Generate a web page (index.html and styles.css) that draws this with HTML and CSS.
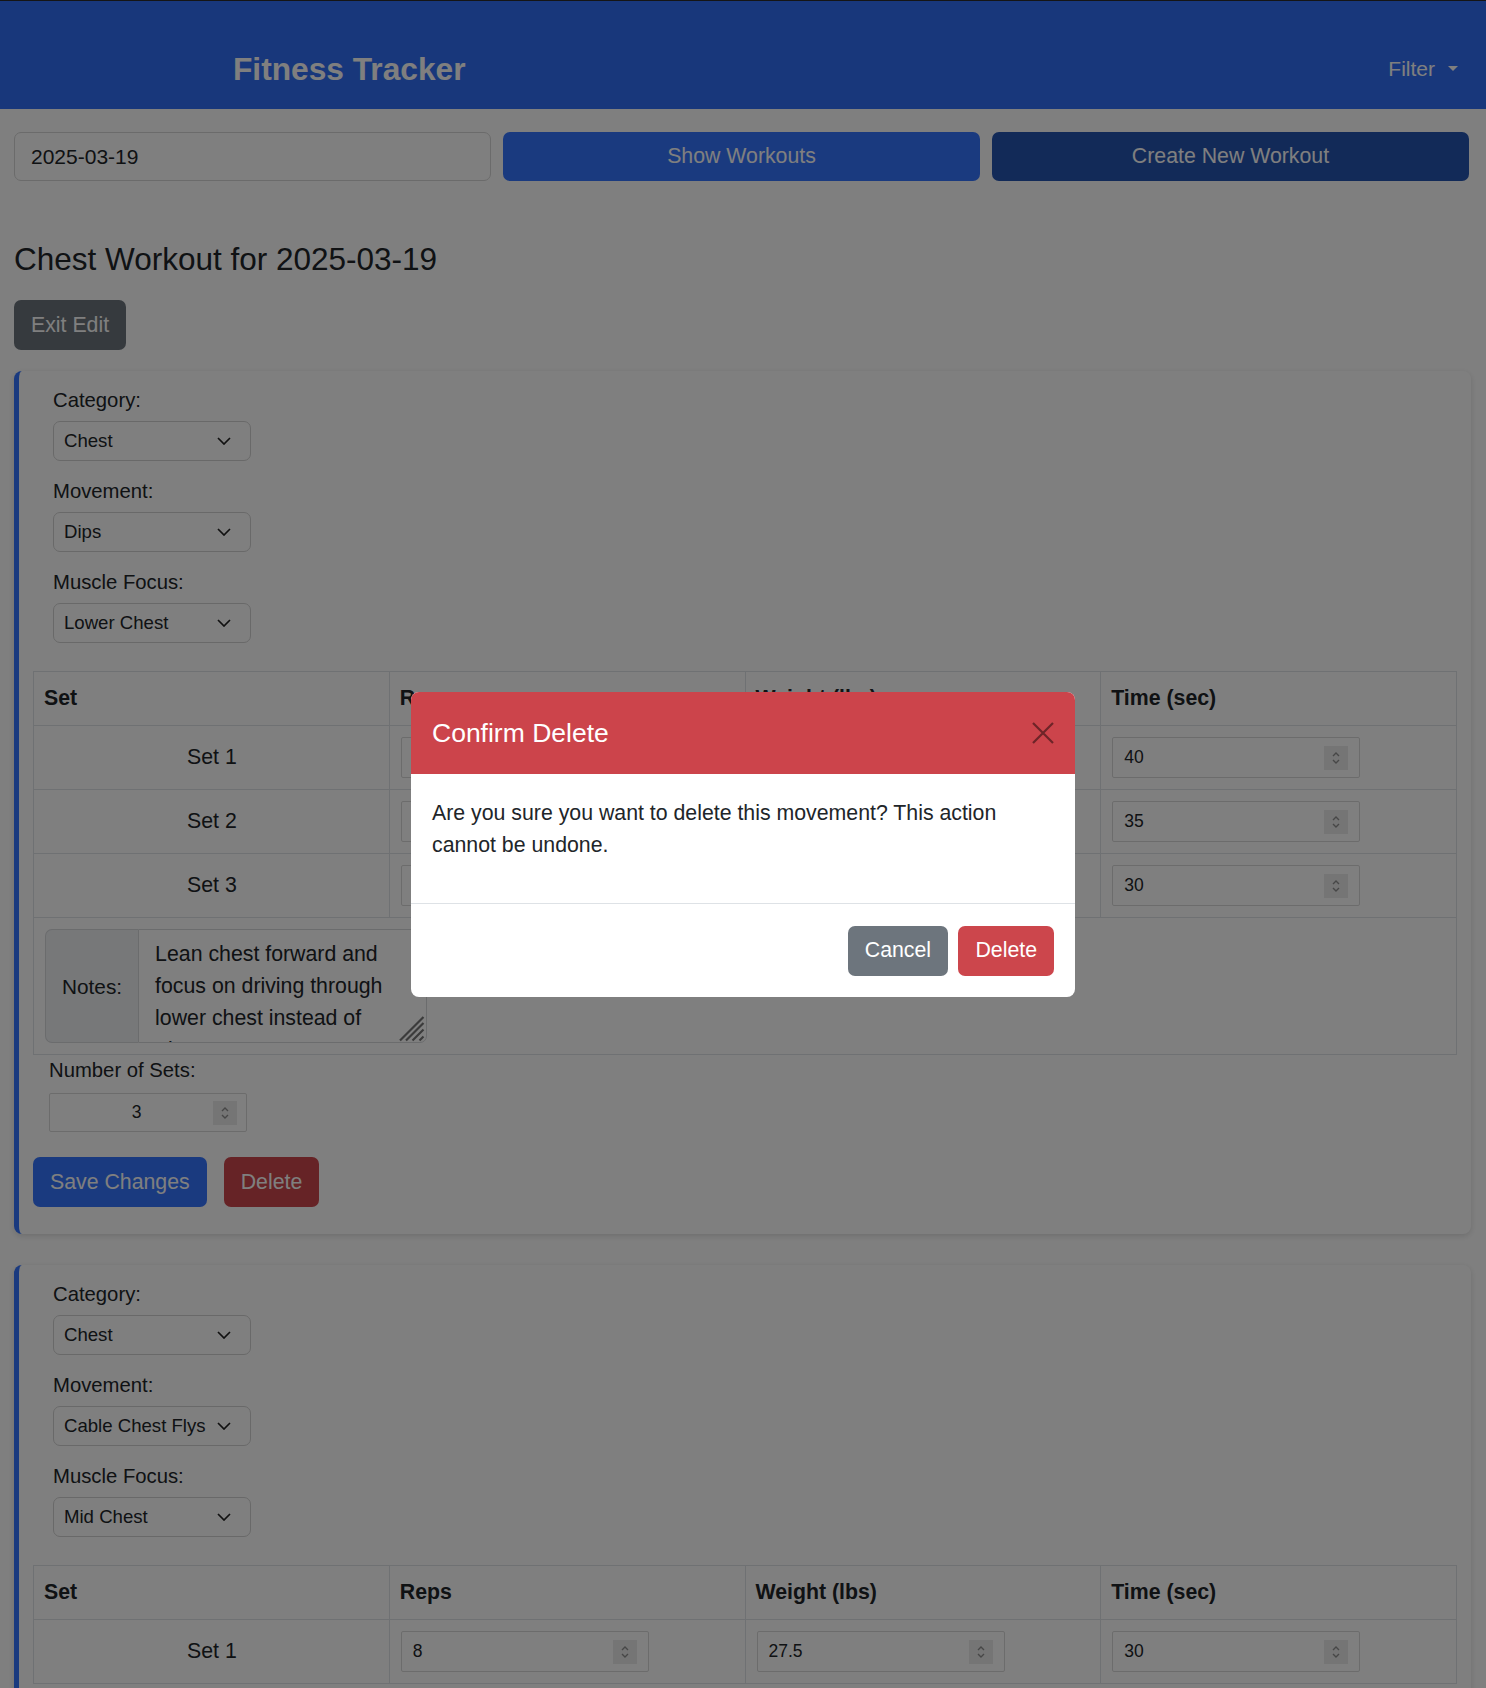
FILE: index.html
```html
<!DOCTYPE html>
<html lang="en">
<head>
<meta charset="utf-8">
<title>Fitness Tracker</title>
<link rel="stylesheet" href="styles.css">
</head>
<body>
<header class="topbar">
  <div class="brand">Fitness Tracker</div>
  <div class="filter">Filter <span class="caret"></span></div>
</header>

<main class="container">
  <div class="toolbar">
    <input class="date-input" type="text" value="2025-03-19">
    <button class="btn btn-primary">Show Workouts</button>
    <button class="btn btn-navy">Create New Workout</button>
  </div>

  <h2 class="page-title">Chest Workout for 2025-03-19</h2>
  <button class="btn btn-secondary">Exit Edit</button>

  <section class="card">
    <div class="field">
      <label class="field-label">Category:</label>
      <div class="select"><span>Chest</span><svg class="chev" viewBox="0 0 14 8"><path d="M1 1l6 6 6-6"/></svg></div>
    </div>
    <div class="field">
      <label class="field-label">Movement:</label>
      <div class="select"><span>Dips</span><svg class="chev" viewBox="0 0 14 8"><path d="M1 1l6 6 6-6"/></svg></div>
    </div>
    <div class="field field-last">
      <label class="field-label">Muscle Focus:</label>
      <div class="select"><span>Lower Chest</span><svg class="chev" viewBox="0 0 14 8"><path d="M1 1l6 6 6-6"/></svg></div>
    </div>

    <table class="sets">
      <thead>
        <tr><th>Set</th><th>Reps</th><th>Weight (lbs)</th><th>Time (sec)</th></tr>
      </thead>
      <tbody>
        <tr>
          <td class="set-name">Set 1</td>
          <td><div class="num"><input type="text" value="10"><span class="spin"><svg viewBox="0 0 10 18"><path d="M2 7l3-3 3 3M2 11l3 3 3-3"/></svg></span></div></td>
          <td><div class="num"><input type="text" value="0"><span class="spin"><svg viewBox="0 0 10 18"><path d="M2 7l3-3 3 3M2 11l3 3 3-3"/></svg></span></div></td>
          <td><div class="num"><input type="text" value="40"><span class="spin"><svg viewBox="0 0 10 18"><path d="M2 7l3-3 3 3M2 11l3 3 3-3"/></svg></span></div></td>
        </tr>
        <tr>
          <td class="set-name">Set 2</td>
          <td><div class="num"><input type="text" value="10"><span class="spin"><svg viewBox="0 0 10 18"><path d="M2 7l3-3 3 3M2 11l3 3 3-3"/></svg></span></div></td>
          <td><div class="num"><input type="text" value="0"><span class="spin"><svg viewBox="0 0 10 18"><path d="M2 7l3-3 3 3M2 11l3 3 3-3"/></svg></span></div></td>
          <td><div class="num"><input type="text" value="35"><span class="spin"><svg viewBox="0 0 10 18"><path d="M2 7l3-3 3 3M2 11l3 3 3-3"/></svg></span></div></td>
        </tr>
        <tr>
          <td class="set-name">Set 3</td>
          <td><div class="num"><input type="text" value="8"><span class="spin"><svg viewBox="0 0 10 18"><path d="M2 7l3-3 3 3M2 11l3 3 3-3"/></svg></span></div></td>
          <td><div class="num"><input type="text" value="0"><span class="spin"><svg viewBox="0 0 10 18"><path d="M2 7l3-3 3 3M2 11l3 3 3-3"/></svg></span></div></td>
          <td><div class="num"><input type="text" value="30"><span class="spin"><svg viewBox="0 0 10 18"><path d="M2 7l3-3 3 3M2 11l3 3 3-3"/></svg></span></div></td>
        </tr>
        <tr>
          <td colspan="4" class="notes-cell">
            <div class="input-group">
              <span class="addon">Notes:</span>
              <div class="notes-box">
                <textarea class="notes">Lean chest forward and focus on driving through lower chest instead of triceps.</textarea>
                <svg class="grip" viewBox="0 0 26 26"><path d="M1 24.5L24.5 1M7 24.5L24.5 7M13.5 24.5L24.5 13.5M20.5 24.5L24.5 20.5"/></svg>
              </div>
            </div>
          </td>
        </tr>
      </tbody>
    </table>

    <label class="sets-label">Number of Sets:</label>
    <div class="num num-sets"><input type="text" value="3"><span class="spin"><svg viewBox="0 0 10 18"><path d="M2 7l3-3 3 3M2 11l3 3 3-3"/></svg></span></div>

    <div class="actions">
      <button class="btn btn-primary">Save Changes</button>
      <button class="btn btn-danger">Delete</button>
    </div>
  </section>

  <section class="card card-next">
    <div class="field">
      <label class="field-label">Category:</label>
      <div class="select"><span>Chest</span><svg class="chev" viewBox="0 0 14 8"><path d="M1 1l6 6 6-6"/></svg></div>
    </div>
    <div class="field">
      <label class="field-label">Movement:</label>
      <div class="select"><span>Cable Chest Flys</span><svg class="chev" viewBox="0 0 14 8"><path d="M1 1l6 6 6-6"/></svg></div>
    </div>
    <div class="field field-last">
      <label class="field-label">Muscle Focus:</label>
      <div class="select"><span>Mid Chest</span><svg class="chev" viewBox="0 0 14 8"><path d="M1 1l6 6 6-6"/></svg></div>
    </div>

    <table class="sets">
      <thead>
        <tr><th>Set</th><th>Reps</th><th>Weight (lbs)</th><th>Time (sec)</th></tr>
      </thead>
      <tbody>
        <tr>
          <td class="set-name">Set 1</td>
          <td><div class="num"><input type="text" value="8"><span class="spin"><svg viewBox="0 0 10 18"><path d="M2 7l3-3 3 3M2 11l3 3 3-3"/></svg></span></div></td>
          <td><div class="num"><input type="text" value="27.5"><span class="spin"><svg viewBox="0 0 10 18"><path d="M2 7l3-3 3 3M2 11l3 3 3-3"/></svg></span></div></td>
          <td><div class="num"><input type="text" value="30"><span class="spin"><svg viewBox="0 0 10 18"><path d="M2 7l3-3 3 3M2 11l3 3 3-3"/></svg></span></div></td>
        </tr>
      </tbody>
    </table>
  </section>
</main>

<div class="backdrop"></div>
<div class="modal-wrap">
  <div class="modal" role="dialog">
    <div class="modal-header">
      <h5 class="modal-title">Confirm Delete</h5>
      <button class="close" aria-label="Close"><svg viewBox="0 0 22 22"><path d="M1 1L21 21M21 1L1 21"/></svg></button>
    </div>
    <div class="modal-body">
      <p>Are you sure you want to delete this movement? This action cannot be undone.</p>
    </div>
    <div class="modal-footer">
      <button class="btn btn-secondary">Cancel</button>
      <button class="btn btn-danger-solid">Delete</button>
    </div>
  </div>
</div>
</body>
</html>
```

FILE: styles.css
```css
* {
  box-sizing: border-box;
}

html,
body {
  margin: 0;
  padding: 0;
}

body {
  font-family: "Liberation Sans", Arial, Helvetica, sans-serif;
  font-size: 21.3px;
  line-height: 1.5;
  color: #212529;
  background: #ffffff;
  overflow: hidden;
}

/* ---------- top bar ---------- */
.topbar {
  height: 109px;
  background: #306ef6;
  border-top: 1px solid #2a2a2a;
  display: flex;
  align-items: center;
  justify-content: space-between;
  padding: 27px 28px 0 233px;
  color: #ffffff;
}

.brand {
  font-size: 31.7px;
  font-weight: bold;
  line-height: 40px;
}

.filter {
  display: flex;
  align-items: center;
  gap: 13px;
  font-size: 21px;
  line-height: 31px;
}

.caret {
  width: 0;
  height: 0;
  border-left: 5px solid transparent;
  border-right: 5px solid transparent;
  border-top: 5.5px solid #ffffff;
}

/* ---------- container ---------- */
.container {
  padding: 0 15px 0 14px;
}

.toolbar {
  display: grid;
  grid-template-columns: repeat(3, 1fr);
  gap: 12px;
  margin-top: 23px;
  padding-right: 2px;
}

.date-input {
  height: 49px;
  border: 1px solid #d6d6d6;
  border-radius: 7px;
  padding: 0 16px;
  font-family: inherit;
  font-size: 21px;
  color: #212529;
  background: #ffffff;
}

.btn {
  font-family: inherit;
  font-size: 21.3px;
  line-height: 31px;
  height: 50px;
  padding: 0 17px;
  border: none;
  border-radius: 7px;
  color: #ffffff;
  cursor: pointer;
}

.toolbar .btn {
  height: 49px;
}

.btn-primary {
  background: #3474ff;
}

.btn-navy {
  background: #2454b0;
}

.btn-secondary {
  background: #6d757d;
}

.btn-danger {
  background: #cc464c;
}

.btn-danger-solid {
  background: #cc464c;
}

.page-title {
  font-size: 31.5px;
  font-weight: normal;
  line-height: 37px;
  margin: 60px 0 22px;
}

/* ---------- cards ---------- */
.card {
  margin-top: 21px;
  background: #ffffff;
  border-left: 5px solid #3474ff;
  border-radius: 8px;
  box-shadow: 0 2px 6px rgba(0, 0, 0, 0.14);
  padding: 14px 14px 27px 14px;
}

.card-next {
  margin-top: 31px;
}

.field {
  margin-left: 20px;
  margin-bottom: 15px;
}

.field-last {
  margin-bottom: 28px;
}

.field-label {
  display: block;
  font-size: 20.3px;
  line-height: 31px;
  margin-bottom: 5px;
}

.select {
  width: 198px;
  height: 40px;
  border: 1px solid #d2d2d2;
  border-radius: 7px;
  background: #ffffff;
  display: flex;
  align-items: center;
  justify-content: space-between;
  padding: 0 19px 0 10px;
  font-size: 18.6px;
}

.chev {
  width: 14px;
  height: 8px;
  flex: none;
}

.chev path {
  fill: none;
  stroke: #222222;
  stroke-width: 1.7;
}

/* ---------- table ---------- */
.sets {
  width: 100%;
  border-collapse: collapse;
  table-layout: fixed;
  border: 1px solid #dee2e6;
}

.sets th,
.sets td {
  border: 1px solid #dee2e6;
  padding: 11px 10px;
  vertical-align: middle;
  line-height: 31px;
}

.sets th {
  text-align: left;
  font-weight: bold;
}

.sets td {
  padding-left: 11px;
}

.sets td.set-name {
  text-align: center;
}

.num {
  width: 248px;
  height: 41px;
  border: 1px solid #d9d9d9;
  border-radius: 2px;
  background: #ffffff;
  display: flex;
  align-items: center;
  padding: 0 11px 0 0;
}

.num input {
  flex: 1;
  min-width: 0;
  height: 100%;
  border: none;
  outline: none;
  background: transparent;
  font-family: inherit;
  font-size: 17.5px;
  color: #212529;
  padding: 0 0 0 11px;
}

.spin {
  width: 24px;
  height: 24px;
  background: #ebebeb;
  display: flex;
  align-items: center;
  justify-content: center;
  flex: none;
}

.spin svg {
  width: 10px;
  height: 18px;
}

.spin path {
  fill: none;
  stroke: #8f8f8f;
  stroke-width: 1.4;
}

.notes-cell {
  padding: 11px !important;
}

.input-group {
  display: flex;
  width: 384px;
  height: 114px;
}

.addon {
  display: flex;
  align-items: center;
  padding: 0 16px;
  font-size: 20.8px;
  background: #eef0f3;
  border: 1px solid #d6d8db;
  border-right: none;
  border-radius: 7px 0 0 7px;
}

.notes-box {
  position: relative;
  width: 289px;
  height: 114px;
}

.notes {
  display: block;
  width: 100%;
  height: 100%;
  border: 1px solid #d6d8db;
  border-radius: 0 7px 7px 0;
  padding: 8px 16px 7px;
  font-family: inherit;
  font-size: 21.3px;
  line-height: 32px;
  color: #212529;
  overflow: hidden;
  resize: none;
  background: #ffffff;
}

.grip {
  position: absolute;
  right: 2px;
  bottom: 1px;
  width: 26px;
  height: 26px;
  pointer-events: none;
}

.grip path {
  fill: none;
  stroke: #777777;
  stroke-width: 2.2;
}

.sets-label {
  display: block;
  margin-left: 16px;
  font-size: 20.3px;
  line-height: 31px;
}

.num-sets {
  width: 198px;
  height: 39px;
  margin: 7px 0 0 16px;
  padding-right: 9px;
}

.num-sets input {
  text-align: center;
  padding: 0 0 0 10px;
}

.actions {
  display: flex;
  gap: 17px;
  margin-top: 25px;
}

.actions .btn {
  height: 50px;
}

/* ---------- modal ---------- */
.backdrop {
  position: fixed;
  inset: 0;
  background: rgba(0, 0, 0, 0.5);
}

.modal-wrap {
  position: fixed;
  inset: 0;
  display: flex;
  align-items: center;
  justify-content: center;
}

.modal {
  width: 664px;
  background: #ffffff;
  border-radius: 8px;
  overflow: hidden;
}

.modal-header {
  height: 82px;
  background: #cc444b;
  display: flex;
  align-items: center;
  justify-content: space-between;
  padding: 0 21px;
}

.modal-title {
  margin: 0;
  font-size: 26.5px;
  font-weight: normal;
  line-height: 40px;
  color: #ffffff;
}

.close {
  width: 22px;
  height: 22px;
  padding: 0;
  border: none;
  background: transparent;
  display: flex;
}

.close svg {
  width: 22px;
  height: 22px;
}

.close path {
  fill: none;
  stroke: #6e2428;
  stroke-width: 2.2;
}

.modal-body {
  padding: 23px 21px 21px;
}

.modal-body p {
  margin: 0 0 21px;
  font-size: 21.3px;
  line-height: 32px;
}

.modal-footer {
  border-top: 1px solid #dee2e6;
  padding: 22px 21px 21px;
  display: flex;
  justify-content: flex-end;
  gap: 10.4px;
}
```
